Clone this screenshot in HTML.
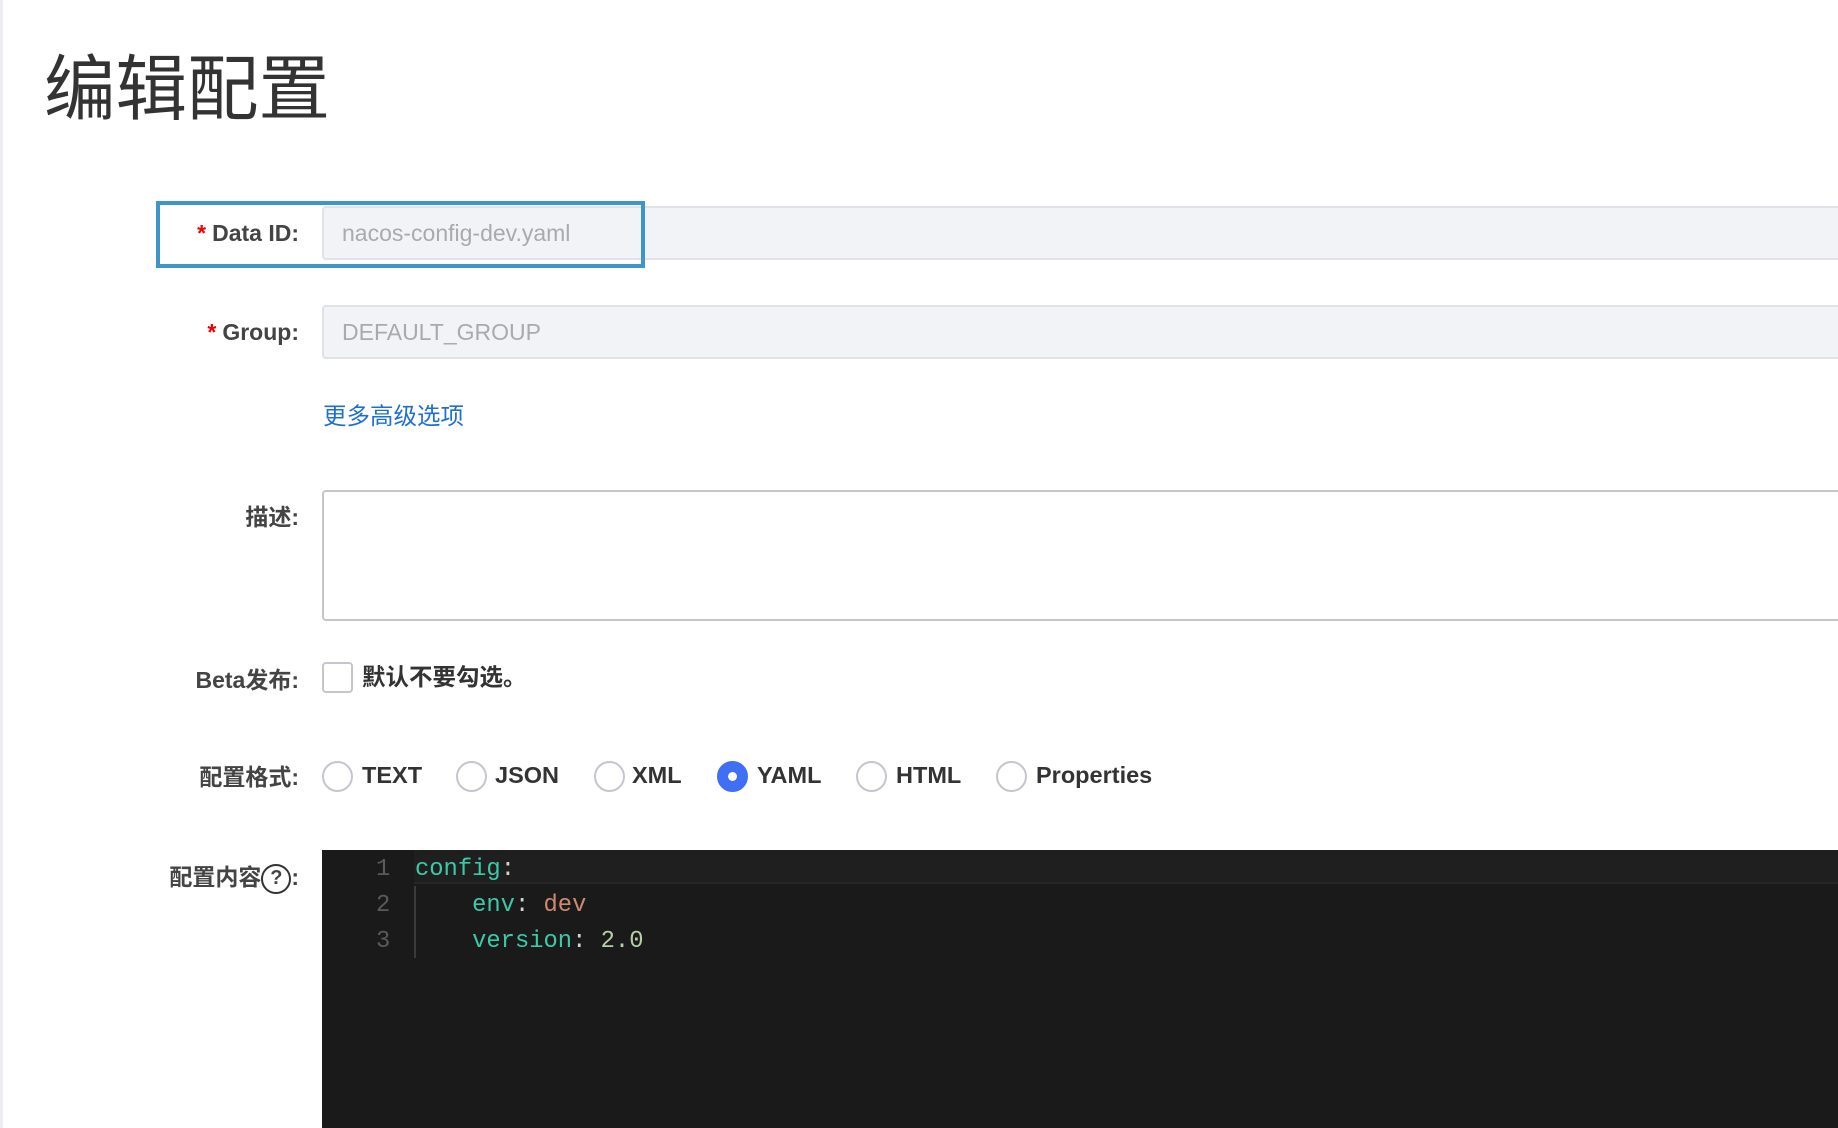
<!DOCTYPE html>
<html><head><meta charset="utf-8"><style>
*{margin:0;padding:0;box-sizing:border-box}
body{width:1838px;height:1128px;overflow:hidden;background:#fff;font-family:"Liberation Sans","Noto Sans CJK SC",sans-serif;position:relative;color:#333}
.abs{position:absolute}
.lbl{position:absolute;right:1539px;font-weight:bold;font-size:23px;color:#444;white-space:nowrap;line-height:30px}
.req{color:#e00;margin-right:6px}
.inp{position:absolute;left:322px;width:1530px;background:#f2f3f7;border:2px solid #e0e2e7;border-radius:4px;color:#aaa;font-size:23px;padding-left:18px}
.radio{position:absolute;top:761px;width:31px;height:31px;border:2px solid #c4c6cf;border-radius:50%;background:#fff}
.rt{position:absolute;top:760px;font-weight:bold;font-size:23.5px;color:#333;line-height:31px}
.code{position:absolute;font-family:"Liberation Mono",monospace;font-size:23.8px;line-height:36px;white-space:pre}
</style></head><body>
<div class="abs" style="left:0;top:0;width:3px;height:1128px;background:#eceef1"></div>
<div class="abs" style="left:44px;top:50px;font-size:71.5px;color:#333;line-height:80px">编辑配置</div>

<div class="inp" style="top:206px;height:54px;line-height:50px">nacos-config-dev.yaml</div>
<div class="abs" style="left:156px;top:201px;width:489px;height:67px;border:4px solid #3d95c9"></div>
<div class="lbl" style="top:218px"><span class="req">*</span>Data ID:</div>

<div class="inp" style="top:305px;height:54px;line-height:50px">DEFAULT_GROUP</div>
<div class="lbl" style="top:317px"><span class="req">*</span>Group:</div>

<div class="abs" style="left:323px;top:401px;font-size:23.5px;color:#1f6fd1;line-height:30px">更多高级选项</div>

<div class="lbl" style="top:502px">描述:</div>
<div class="abs" style="left:322px;top:490px;width:1530px;height:131px;border:2px solid #c4c6cf;border-radius:4px;background:#fff"></div>

<div class="lbl" style="top:665px">Beta发布:</div>
<div class="abs" style="left:322px;top:662px;width:31px;height:31px;border:2px solid #c4c6cf;border-radius:4px"></div>
<div class="abs" style="left:362px;top:662px;font-size:23.5px;font-weight:bold;line-height:30px">默认不要勾选。</div>

<div class="lbl" style="top:762px">配置格式:</div>
<div class="radio" style="left:322px"></div><div class="rt" style="left:362px">TEXT</div>
<div class="radio" style="left:456px"></div><div class="rt" style="left:495px">JSON</div>
<div class="radio" style="left:594px"></div><div class="rt" style="left:632px">XML</div>
<div class="radio" style="left:717px;background:#3e6ff5;border-color:#3e6ff5"><div style="position:absolute;left:9px;top:9px;width:9px;height:9px;border-radius:50%;background:#fff"></div></div><div class="rt" style="left:757px">YAML</div>
<div class="radio" style="left:856px"></div><div class="rt" style="left:896px">HTML</div>
<div class="radio" style="left:996px"></div><div class="rt" style="left:1036px">Properties</div>

<div class="lbl" style="top:862px">配置内容<span style="display:inline-block;width:30px;height:30px;border:2.5px solid #333;border-radius:50%;font-size:20px;line-height:25px;text-align:center;vertical-align:middle">?</span>:</div>

<div class="abs" style="left:322px;top:850px;width:1516px;height:278px;background:#1a1a1a"></div>
<div class="abs" style="left:414px;top:850px;width:1424px;height:34px;background:#1f1f1f;border-bottom:2px solid #262626"></div>
<div class="abs" style="left:414px;top:886px;width:2px;height:72px;background:#3a3a3a"></div>
<div class="code" style="left:376px;top:852px;color:#5a5a5a">1
2
3</div>
<div class="code" style="left:415px;top:852px;color:#d4d4d4"><span style="color:#3cc9a9">config</span>:
    <span style="color:#3cc9a9">env</span>: <span style="color:#ce8a6e">dev</span>
    <span style="color:#3cc9a9">version</span>: <span style="color:#b5cea8">2.0</span></div>
</body></html>
